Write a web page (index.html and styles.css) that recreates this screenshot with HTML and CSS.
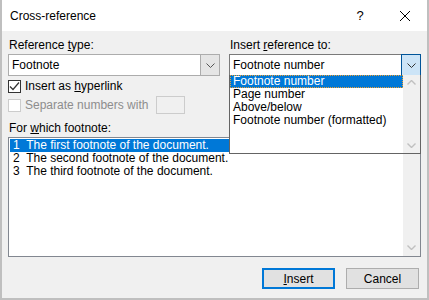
FILE: index.html
```html
<!DOCTYPE html>
<html lang="en">
<head>
    <meta charset="UTF-8">
    <title>Cross-reference</title>
    <link rel="stylesheet" href="styles.css">
</head>
<body>
    <div class="window">
        <div class="titlebar">
            <span class="title">Cross-reference</span>
            <span class="help">?</span>
            <span class="close">
                <svg width="12" height="12" viewBox="0 0 12 12"><path d="M1 1 L11 11 M11 1 L1 11" stroke="#000" stroke-width="1"/></svg>
            </span>
        </div>

        <div class="content">
            <div class="top-row">
                <div class="col-left">
                    <div class="label">Reference <u>t</u>ype:</div>
                    <div class="combo">
                        <span class="combo-text">Footnote</span>
                        <span class="combo-btn">
                            <svg width="9" height="5" viewBox="0 0 9 5"><path d="M0.5 0.5 L4.5 4.5 L8.5 0.5" fill="none" stroke="#555" stroke-width="1"/></svg>
                        </span>
                    </div>
                    <div class="check-row">
                        <span class="checkbox checked">
                            <svg width="11" height="11" viewBox="0 0 11 11"><path d="M1 5.5 L4 8.5 L10 1.5" fill="none" stroke="#333" stroke-width="1.2"/></svg>
                        </span>
                        <span>Insert as <u>h</u>yperlink</span>
                    </div>
                    <div class="check-row disabled">
                        <span class="checkbox"></span>
                        <span>Separate numbers with</span>
                        <span class="small-input"></span>
                    </div>
                </div>
                <div class="col-right">
                    <div class="label">Insert <u>r</u>eference to:</div>
                    <div class="combo open">
                        <span class="combo-text">Footnote number</span>
                        <span class="combo-btn">
                            <svg width="9" height="5" viewBox="0 0 9 5"><path d="M0.5 0.5 L4.5 4.5 L8.5 0.5" fill="none" stroke="#333" stroke-width="1"/></svg>
                        </span>
                    </div>
                </div>
            </div>

            <div class="label footnote-label">For <u>w</u>hich footnote:</div>
            <div class="listbox">
                <div class="list-items">
                    <div class="item selected">1&nbsp; The first footnote of the document.</div>
                    <div class="item">2&nbsp; The second footnote of the document.</div>
                    <div class="item">3&nbsp; The third footnote of the document.</div>
                </div>
                <div class="scrollbar">
                    <span></span>
                    <svg width="9" height="5" viewBox="0 0 9 5"><path d="M0.5 0.5 L4.5 4.5 L8.5 0.5" fill="none" stroke="#c0c0c0" stroke-width="1.4"/></svg>
                </div>
            </div>

            <div class="buttons">
                <button class="btn default"><u>I</u>nsert</button>
                <button class="btn">Cancel</button>
            </div>

            <div class="dropdown">
                <div class="list-items">
                    <div class="item selected focus">Footnote number</div>
                    <div class="item">Page number</div>
                    <div class="item">Above/below</div>
                    <div class="item">Footnote number (formatted)</div>
                </div>
                <div class="scrollbar">
                    <svg width="9" height="5" viewBox="0 0 9 5"><path d="M0.5 4.5 L4.5 0.5 L8.5 4.5" fill="none" stroke="#c0c0c0" stroke-width="1.4"/></svg>
                    <svg width="9" height="5" viewBox="0 0 9 5"><path d="M0.5 0.5 L4.5 4.5 L8.5 0.5" fill="none" stroke="#c0c0c0" stroke-width="1.4"/></svg>
                </div>
            </div>
        </div>
    </div>
</body>
</html>
```

FILE: styles.css
```css
body {
    margin: 0;
    font-family: "Liberation Sans", Arial, sans-serif;
    font-size: 12px;
    color: #000;
}
.window {
    width: 429px;
    height: 300px;
    box-sizing: border-box;
    border: 2px solid #bfbfbf;
    border-top: none;
    background-color: #f0f0f0;
    display: flex;
    flex-direction: column;
}
.titlebar {
    height: 31px;
    background-color: white;
    display: flex;
    align-items: center;
    padding-left: 8px;
}
.title {
    flex: 1;
    font-size: 12px;
}
.help {
    width: 46px;
    text-align: center;
    font-size: 13px;
}
.close {
    width: 44px;
    display: flex;
    justify-content: center;
}
.content {
    position: relative;
    flex: 1;
    padding: 6px 6px 0 6px;
}
.top-row {
    display: flex;
    gap: 9px;
}
.col-left {
    width: 212px;
}
.col-right {
    width: 192px;
}
.label {
    height: 17px;
    line-height: 16px;
    padding-left: 1px;
}
.combo {
    height: 22px;
    box-sizing: border-box;
    border: 1px solid #acacac;
    background-color: white;
    display: flex;
}
.combo-text {
    flex: 1;
    line-height: 20px;
    padding-left: 3px;
}
.combo-btn {
    width: 18px;
    background-color: #e5e5e5;
    border-left: 1px solid #acacac;
    display: flex;
    align-items: center;
    justify-content: center;
}
.combo.open {
    border-color: #7a7a7a;
}
.combo.open .combo-btn {
    background-color: #cce4f7;
    border: 1px solid #005499;
    margin: -1px -1px -1px 0;
}
.check-row {
    display: flex;
    align-items: center;
    height: 18px;
    margin-top: 1px;
}
.checkbox {
    width: 13px;
    height: 13px;
    box-sizing: border-box;
    border: 1px solid #333;
    background-color: white;
    margin-right: 4px;
    display: flex;
    align-items: center;
    justify-content: center;
}
.check-row.disabled {
    color: #8d8d8d;
}
.check-row.disabled .checkbox {
    border-color: #cccccc;
}
.small-input {
    width: 29px;
    height: 18px;
    box-sizing: border-box;
    border: 1px solid #cccccc;
    background-color: #f0f0f0;
    margin-left: auto;
    margin-right: 35px;
}
.footnote-label {
    margin-top: 4px;
    line-height: 20px;
    height: 19px;
}
.listbox {
    width: 413px;
    height: 120px;
    box-sizing: border-box;
    border: 1px solid #828790;
    background-color: white;
    display: flex;
}
.list-items {
    flex: 1;
    padding: 1px;
}
.item {
    height: 13px;
    line-height: 13px;
    padding-left: 3px;
    white-space: nowrap;
}
.item.selected {
    background-color: #0078d7;
    color: white;
}
.item.focus {
    outline: 1px dotted #f0a030;
    outline-offset: -1px;
}
.scrollbar {
    width: 17px;
    background-color: #f0f0f0;
    display: flex;
    flex-direction: column;
    justify-content: space-between;
    align-items: center;
    padding: 6px 0;
    box-sizing: border-box;
}
.buttons {
    display: flex;
    justify-content: flex-end;
    gap: 11px;
    margin-top: 11px;
    padding-right: 2px;
}
.btn {
    width: 73px;
    height: 21px;
    font-family: inherit;
    font-size: 12px;
    background-color: #e1e1e1;
    border: 1px solid #adadad;
    padding: 0;
}
.btn.default {
    border: 2px solid #0078d7;
}
.dropdown {
    position: absolute;
    left: 227px;
    top: 44px;
    width: 192px;
    height: 79px;
    box-sizing: border-box;
    border: 1px solid #646464;
    border-top: none;
    background-color: white;
    display: flex;
}
.dropdown .list-items {
    padding: 0;
}
.dropdown .scrollbar {
    padding: 5px 0;
}
```
